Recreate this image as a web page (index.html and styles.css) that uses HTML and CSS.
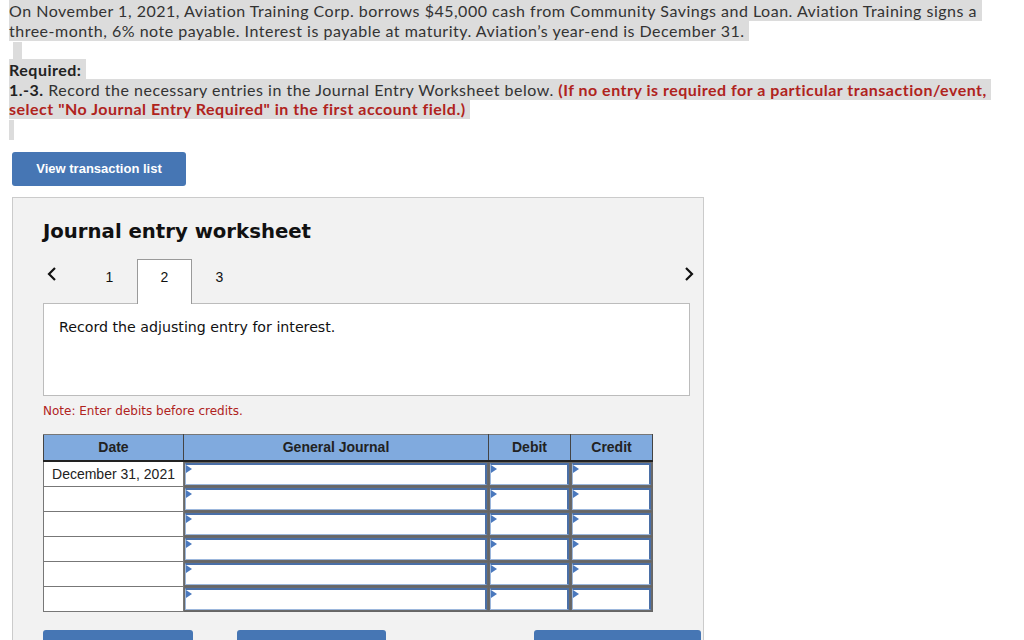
FILE: index.html
```html
<!DOCTYPE html>
<html lang="en">
<head>
    <meta charset="UTF-8">
    <title>Journal entry worksheet</title>
    <link rel="stylesheet" href="styles.css">
</head>
<body>
    <div class="question">
        <p class="intro"><span class="sel">On November 1, 2021, Aviation Training Corp. borrows $45,000 cash from Community Savings and Loan. Aviation Training signs a&nbsp;<br>three-month, 6% note payable. Interest is payable at maturity. Aviation’s year-end is December 31.&nbsp;</span></p>
        <div class="sel-gap"></div>
        <p class="required"><span class="sel"><b>Required:</b>&nbsp;<br><b>1.-3.</b> Record the necessary entries in the Journal Entry Worksheet below. <b class="warn">(If no entry is required for a particular transaction/event,</b>&nbsp;<br><b class="warn">select "No Journal Entry Required" in the first account field.)</b>&nbsp;</span></p>
        <div class="sel-gap small"></div>
    </div>

    <button type="button" class="blue-btn list-btn">View transaction list</button>

    <div class="worksheet">
        <h2>Journal entry worksheet</h2>

        <div class="tabs">
            <span class="arrow">
                <svg width="10" height="16" viewBox="0 0 10 16"><path d="M8 2 L2 8 L8 14" fill="none" stroke="#111" stroke-width="2.2"/></svg>
            </span>
            <span class="tab">1</span>
            <span class="tab active">2</span>
            <span class="tab">3</span>
            <span class="arrow right">
                <svg width="10" height="16" viewBox="0 0 10 16"><path d="M2 2 L8 8 L2 14" fill="none" stroke="#111" stroke-width="2.2"/></svg>
            </span>
        </div>
        <div class="task">Record the adjusting entry for interest.</div>

        <p class="note">Note: Enter debits before credits.</p>

        <table class="journal">
            <thead>
                <tr>
                    <th class="c-date">Date</th>
                    <th class="c-acct">General Journal</th>
                    <th class="c-num">Debit</th>
                    <th class="c-num">Credit</th>
                </tr>
            </thead>
            <tbody id="rows"></tbody>
        </table>

        <div class="actions">
            <button type="button" class="blue-btn act-1"></button>
            <button type="button" class="blue-btn act-2"></button>
            <button type="button" class="blue-btn act-3"></button>
        </div>
    </div>

    <script>
        // 6行の入力欄
        var body = document.getElementById('rows');
        for (var i = 0; i < 6; i++) {
            var tr = document.createElement('tr');
            tr.innerHTML = '<td class="date">' + (i === 0 ? 'December 31, 2021' : '') + '</td>' +
                '<td class="cell"><div class="box"></div></td>' +
                '<td class="cell"><div class="box"></div></td>' +
                '<td class="cell"><div class="box"></div></td>';
            body.appendChild(tr);
        }
    </script>
</body>
</html>
```

FILE: styles.css
```css
body {
    margin: 0;
    padding: 0;
    background: #fff;
    color: #333;
}
.question {
    font-family: "Lato", "Open Sans", sans-serif;
    font-size: 16px;
    line-height: 19.5px;
    letter-spacing: 0.5px;
    padding: 1px 8px 0 9px;
}
.question p {
    margin: 0;
    white-space: nowrap;
}
.sel {
    background: #dcdcdc;
    padding: 1px 0;
}
.sel-gap {
    width: 9px;
    height: 18px;
    background: #dcdcdc;
    margin: 2px 0 0 4px;
}
.sel-gap.small {
    width: 5px;
    height: 20px;
    margin: 1px 0 0 0;
}
.required b {
    color: #222;
}
.required .warn {
    color: #b0231d;
}
.blue-btn {
    background: #4676b4;
    border: none;
    border-radius: 3px;
    color: #fff;
    font-family: "Liberation Sans", Arial, sans-serif;
    font-weight: bold;
    font-size: 13px;
    cursor: pointer;
}
.list-btn {
    display: block;
    width: 174px;
    height: 34px;
    margin: 12px 0 0 12px;
}
.worksheet {
    margin: 11px 0 0 12px;
    width: 692px;
    height: 460px;
    background: #f2f2f2;
    border: 1px solid #cbcbcb;
    padding: 0 0 0 30px;
    box-sizing: border-box;
    font-family: "DejaVu Sans", Verdana, sans-serif;
}
.worksheet h2 {
    margin: 0;
    padding: 22px 0 0 0;
    font-size: 19.7px;
    font-weight: bold;
    color: #111;
    height: 37px;
}
.tabs {
    display: flex;
    align-items: stretch;
    height: 44px;
    margin-top: 2px;
    width: 647px;
    font-family: "Liberation Sans", Arial, sans-serif;
    font-size: 14px;
    color: #111;
}
.arrow {
    display: flex;
    align-items: center;
    padding: 0 0 14px 4px;
    width: 35px;
}
.arrow.right {
    margin-left: auto;
    margin-right: -4px;
    width: auto;
    padding: 0 0 14px 0;
}
.tab {
    width: 55px;
    display: flex;
    align-items: center;
    justify-content: center;
    padding-bottom: 9px;
    box-sizing: border-box;
    border: 1px solid transparent;
    border-bottom: none;
}
.tab.active {
    background: #fff;
    border-color: #9a9a9a;
    margin-bottom: -1px;
    position: relative;
    z-index: 1;
    padding-bottom: 10px;
}
.task {
    width: 647px;
    height: 93px;
    box-sizing: border-box;
    background: #fff;
    border: 1px solid #bcbcbc;
    padding: 15px 15px;
    font-size: 14.2px;
    color: #111;
}
.note {
    margin: 8px 0 0 0;
    font-size: 12px;
    color: #b0231d;
    height: 30px;
}
.journal {
    border-collapse: collapse;
    width: 605px;
    font-family: "Liberation Sans", Arial, sans-serif;
    table-layout: fixed;
}
.journal th {
    background: #80aade;
    height: 25px;
    border: 1px solid #444;
    border-top-color: #777;
    border-bottom: 2px solid #222;
    font-size: 14px;
    font-weight: bold;
    color: #222;
    padding: 0;
}
.c-date { width: 139px; }
.c-acct { width: 304px; }
.c-num { width: 81px; }
.journal tbody tr {
    height: 25px;
}
.journal td {
    padding: 0;
    border: 1px solid #777;
    background: #fff;
}
.journal td.date {
    font-size: 14px;
    color: #222;
    text-align: center;
    vertical-align: middle;
}
.journal td.cell {
    background: #6a6a6a;
    padding: 1px;
    border-color: #666;
}
.box {
    position: relative;
    height: 22px;
    box-sizing: border-box;
    background: #fff;
    border: 2px solid #4a6fa7;
    border-left: 1px solid #9cb7dc;
    border-bottom: 1px solid #9cb7dc;
}
.box::before {
    content: "";
    position: absolute;
    left: 0;
    top: 0;
    border-left: 6px solid #4a78bd;
    border-top: 4px solid transparent;
    border-bottom: 4px solid transparent;
}
.actions {
    display: flex;
    margin-top: 18px;
}
.blue-btn.act-1 { width: 150px; height: 30px; }
.blue-btn.act-2 { width: 149px; height: 30px; margin-left: 44px; }
.blue-btn.act-3 { width: 167px; height: 30px; margin-left: 148px; }
```
